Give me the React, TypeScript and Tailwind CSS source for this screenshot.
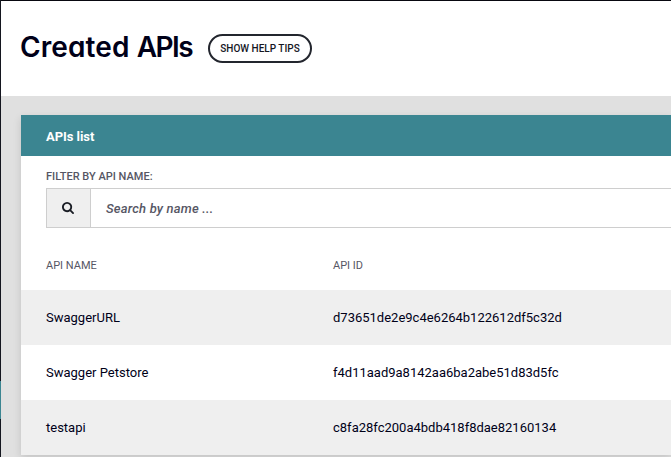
const apis = [
  { name: "SwaggerURL", id: "d73651de2e9c4e6264b122612df5c32d" },
  { name: "Swagger Petstore", id: "f4d11aad9a8142aa6ba2abe51d83d5fc" },
  { name: "testapi", id: "c8fa28fc200a4bdb418f8dae82160134" },
];

function SearchIcon() {
  return (
    <svg width="12" height="12" viewBox="0 0 1664 1664" fill="#191c24" aria-hidden="true">
      <path d="M1152 704q0-185-131.500-316.500T704 256 387.500 387.500 256 704t131.500 316.500T704 1152t316.500-131.500T1152 704zm512 832q0 52-38 90t-90 38q-54 0-90-38l-343-342q-179 124-399 124-143 0-273.500-55.500t-225-150-150-225T0 704t55.500-273.500 150-225 225-150T704 0t273.500 55.500 225 150 150 225T1408 704q0 220-124 399l343 343q37 37 37 90z" />
    </svg>
  );
}

export default function App() {
  return (
    <div className="flex h-[457px] w-[671px] overflow-hidden bg-[#e0e0e0] font-['Roboto',sans-serif] text-[#000018]">
      <aside className="flex w-px shrink-0 flex-col bg-[#14161f] pt-[381px]">
        <div className="h-[38px] bg-[#3b8591]" />
      </aside>
      <main className="flex min-w-0 flex-1 flex-col">
        <header className="flex h-24 shrink-0 items-center border-t border-[#08080f] bg-white pl-[19px]">
          <h1 className="w-[188px] shrink-0 whitespace-nowrap pb-[3px] font-['Inter',sans-serif] text-[28px] leading-8 font-semibold tracking-[0.1px] [font-feature-settings:'cv11','ss03']">
            Created <span className="tracking-[-1.5px]">APIs</span>
          </h1>
          <button className="h-[29px] w-[104px] shrink-0 rounded-full border-2 border-[#23262e] text-[10px] font-medium whitespace-nowrap text-[#14161f]">
            SHOW HELP TIPS
          </button>
        </header>
        <section className="mt-[19px] ml-5 h-[340px] shrink-0 bg-white shadow-[0_3px_8px_rgba(0,0,0,0.13)]">
          <h2 className="flex h-[41px] items-center bg-[#3b8591] pt-0.5 pl-[25px] text-[13px] font-bold tracking-[-0.05px] text-white">
            APIs list
          </h2>
          <div className="h-[72px] pt-[13px] pl-[25px]">
            <label className="block h-[19px] text-[11px] leading-4 font-medium text-[#565664]">
              FILTER BY API NAME:
            </label>
            <div className="flex h-10 border-y border-l border-[#cecece]">
              <span className="flex w-11 items-center justify-center border-r border-[#cecece] bg-[#efefef] pr-px">
                <SearchIcon />
              </span>
              <span className="flex items-center pt-0.5 pl-[15px] text-[13px] font-medium tracking-[0.19px] text-[#565664] italic">
                Search by name ...
              </span>
            </div>
          </div>
          <div className="grid h-[62px] grid-cols-[287px_1fr] pt-[30px] pl-[25px] text-[11px] leading-4 text-[#565664]">
            <span>API NAME</span>
            <span>API ID</span>
          </div>
          {apis.map((api) => (
            <div
              key={api.id}
              className="grid h-[55px] grid-cols-[287px_1fr] items-center pl-[25px] text-[13px] odd:bg-white even:bg-[#efefef]"
            >
              <span>{api.name}</span>
              <span>{api.id}</span>
            </div>
          ))}
        </section>
      </main>
    </div>
  );
}
